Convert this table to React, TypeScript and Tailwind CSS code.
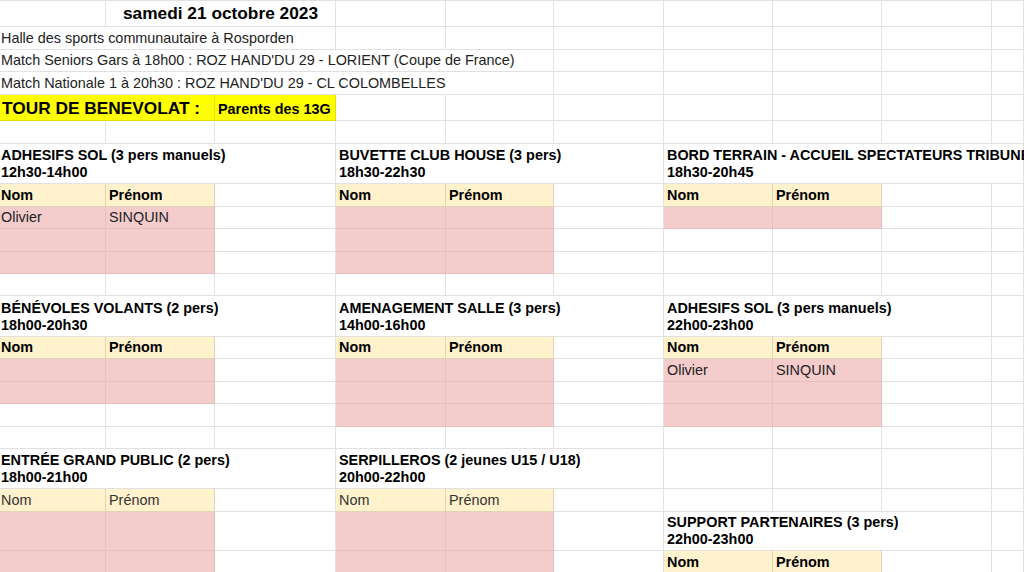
import type { ReactNode } from 'react';
import clsx from 'clsx';

const GRID =
  'grid grid-cols-[106px_109px_121px_110px_108px_110px_109px_109px_110px_1fr]';

const spanClass: Record<number, string> = {
  1: 'col-span-1',
  2: 'col-span-2',
  3: 'col-span-3',
  4: 'col-span-4',
  5: 'col-span-5',
};

type Fill = 'pink' | 'head' | 'yellow' | undefined;

const fillClass = (fill: Fill) =>
  fill === 'pink'
    ? 'bg-[#f4cccc] border-[#e6bfbf]'
    : fill === 'head'
      ? 'bg-[#fff2cc] border-[#0000001e]'
      : fill === 'yellow'
        ? 'bg-[#ffff00] border-[#0000001e]'
        : 'bg-white border-[#0000001e]';

type CellProps = {
  span?: number;
  fill?: Fill;
  first?: boolean;
  className?: string;
  children?: ReactNode;
};

function Cell({ span = 1, fill, first, className, children }: CellProps) {
  return (
    <div
      className={clsx(
        'flex items-center whitespace-nowrap border-r border-b text-[14.4px] leading-[17px] text-[#222]',
        spanClass[span],
        fillClass(fill),
        first ? 'pl-px' : 'pl-[3px]',
        className
      )}
    >
      {children}
    </div>
  );
}

function Row({ h, top, children }: { h: string; top?: boolean; children: ReactNode }) {
  return <div className={clsx(GRID, h, top && 'border-t border-[#0000001e]')}>{children}</div>;
}

function Blanks({ n }: { n: number }) {
  return (
    <>
      {Array.from({ length: n }, (_, i) => (
        <Cell key={i} />
      ))}
    </>
  );
}

// one block of the sheet: 3 columns wide (4 when it runs into the last column)
type Part =
  | { kind: 'title'; title: string; time: string; span?: number }
  | { kind: 'head'; bold?: boolean }
  | { kind: 'pink'; nom?: string; prenom?: string }
  | { kind: 'blank' };

function Group({ part, first }: { part: Part; first?: boolean }) {
  if (part.kind === 'title') {
    return (
      <Cell
        span={part.span ?? 3}
        first={first}
        className="flex-col !items-start justify-end pb-[2px] font-bold text-black"
      >
        <span>{part.title}</span>
        <span>{part.time}</span>
      </Cell>
    );
  }
  if (part.kind === 'head') {
    const weight = part.bold === false ? 'text-[#333]' : 'font-bold text-black';
    return (
      <>
        <Cell fill="head" first={first} className={weight}>
          Nom
        </Cell>
        <Cell fill="head" className={weight}>
          Prénom
        </Cell>
        <Cell />
      </>
    );
  }
  if (part.kind === 'pink') {
    return (
      <>
        <Cell fill="pink" first={first}>
          {part.nom}
        </Cell>
        <Cell fill="pink">{part.prenom}</Cell>
        <Cell />
      </>
    );
  }
  return <Blanks n={3} />;
}

type BlockRow = { h: string; parts: [Part, Part, Part]; noLast?: boolean };

const blank: Part = { kind: 'blank' };
const pink: Part = { kind: 'pink' };
const head: Part = { kind: 'head' };

const blockRows: BlockRow[] = [
  {
    h: 'h-[40px]',
    parts: [
      { kind: 'title', title: 'ADHESIFS SOL (3 pers manuels)', time: '12h30-14h00' },
      { kind: 'title', title: 'BUVETTE CLUB HOUSE (3 pers)', time: '18h30-22h30' },
      {
        kind: 'title',
        title: 'BORD TERRAIN - ACCUEIL SPECTATEURS TRIBUNE',
        time: '18h30-20h45',
        span: 4,
      },
    ],
    noLast: true,
  },
  { h: 'h-[23px]', parts: [head, head, head] },
  { h: 'h-[22px]', parts: [{ kind: 'pink', nom: 'Olivier', prenom: 'SINQUIN' }, pink, pink] },
  { h: 'h-[23px]', parts: [pink, pink, blank] },
  { h: 'h-[22px]', parts: [pink, pink, blank] },
  { h: 'h-[22px]', parts: [blank, blank, blank] },

  {
    h: 'h-[41px]',
    parts: [
      { kind: 'title', title: 'BÉNÉVOLES VOLANTS (2 pers)', time: '18h00-20h30' },
      { kind: 'title', title: 'AMENAGEMENT SALLE (3 pers)', time: '14h00-16h00' },
      { kind: 'title', title: 'ADHESIFS SOL (3 pers manuels)', time: '22h00-23h00' },
    ],
  },
  { h: 'h-[22px]', parts: [head, head, head] },
  { h: 'h-[23px]', parts: [pink, pink, { kind: 'pink', nom: 'Olivier', prenom: 'SINQUIN' }] },
  { h: 'h-[22px]', parts: [pink, pink, pink] },
  { h: 'h-[23px]', parts: [blank, pink, pink] },
  { h: 'h-[22px]', parts: [blank, blank, blank] },

  {
    h: 'h-[40px]',
    parts: [
      { kind: 'title', title: 'ENTRÉE GRAND PUBLIC (2 pers)', time: '18h00-21h00' },
      { kind: 'title', title: 'SERPILLEROS (2 jeunes U15 / U18)', time: '20h00-22h00' },
      blank,
    ],
  },
  { h: 'h-[23px]', parts: [{ kind: 'head', bold: false }, { kind: 'head', bold: false }, blank] },
  {
    h: 'h-[39px]',
    parts: [
      pink,
      pink,
      { kind: 'title', title: 'SUPPORT PARTENAIRES (3 pers)', time: '22h00-23h00' },
    ],
  },
  { h: 'h-[23px]', parts: [pink, pink, head] },
];

export default function App() {
  return (
    <div className="h-[572px] w-[1024px] overflow-hidden bg-white font-['Liberation_Sans',Arial,sans-serif]">
      <Row h="h-[27px]" top>
        <Cell first />
        <Cell span={2} className="justify-center !pl-0 text-[17.3px] font-bold text-black">
          samedi 21 octobre 2023
        </Cell>
        <Blanks n={7} />
      </Row>
      <Row h="h-[23px]">
        <Cell span={3} first>
          Halle des sports communautaire à Rosporden
        </Cell>
        <Blanks n={7} />
      </Row>
      <Row h="h-[22px]">
        <Cell span={5} first>
          Match Seniors Gars à 18h00 : ROZ HAND'DU 29 - LORIENT (Coupe de France)
        </Cell>
        <Blanks n={5} />
      </Row>
      <Row h="h-[23px]">
        <Cell span={5} first>
          Match Nationale 1 à 20h30 : ROZ HAND'DU 29 - CL COLOMBELLES
        </Cell>
        <Blanks n={5} />
      </Row>
      <Row h="h-[26px]">
        <Cell
          span={2}
          fill="yellow"
          className="items-end !pl-[2px] pb-[2px] text-[17.3px] font-bold leading-[20px] text-black"
        >
          TOUR DE BENEVOLAT :
        </Cell>
        <Cell fill="yellow" className="items-end pb-[2px] font-bold text-black">
          Parents des 13G
        </Cell>
        <Blanks n={7} />
      </Row>
      <Row h="h-[23px]">
        <Blanks n={10} />
      </Row>

      {blockRows.map((row, i) => (
        <Row key={i} h={row.h}>
          <Group part={row.parts[0]} first />
          <Group part={row.parts[1]} />
          <Group part={row.parts[2]} />
          {!row.noLast && <Cell />}
        </Row>
      ))}
    </div>
  );
}
